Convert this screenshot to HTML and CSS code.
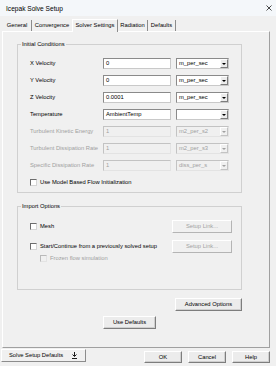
FILE: index.html
```html
<!DOCTYPE html>
<html>
<head lang="en">
    <meta charset="UTF-8">
    <title>Icepak Solve Setup</title>
    <link rel="stylesheet" href="styles.css">
</head>
<body>
<div class="titlebar">
    <span>Icepak Solve Setup</span>
    <svg class="close" width="6" height="6" viewBox="0 0 6 6"><path d="M0.5 0.5L5.5 5.5M5.5 0.5L0.5 5.5"/></svg>
</div>
<ul class="tabs">
    <li class="t1">General</li>
    <li class="t2">Convergence</li>
    <li class="t3 current">Solver Settings</li>
    <li class="t4">Radiation</li>
    <li class="t5">Defaults</li>
</ul>
<div class="panel">
    <fieldset class="group initial">
        <legend>Initial Conditions</legend>
        <div class="field">
            <label>X Velocity</label>
            <span class="edit">0</span>
            <span class="combo">m_per_sec<i class="arrow"></i></span>
        </div>
        <div class="field">
            <label>Y Velocity</label>
            <span class="edit">0</span>
            <span class="combo">m_per_sec<i class="arrow"></i></span>
        </div>
        <div class="field">
            <label>Z Velocity</label>
            <span class="edit">0.0001</span>
            <span class="combo">m_per_sec<i class="arrow"></i></span>
        </div>
        <div class="field">
            <label>Temperature</label>
            <span class="edit">AmbientTemp</span>
            <span class="combo"><i class="arrow"></i></span>
        </div>
        <div class="field disabled">
            <label>Turbulent Kinetic Energy</label>
            <span class="edit">1</span>
            <span class="combo">m2_per_s2<i class="arrow"></i></span>
        </div>
        <div class="field disabled">
            <label>Turbulent Dissipation Rate</label>
            <span class="edit">1</span>
            <span class="combo">m2_per_s3<i class="arrow"></i></span>
        </div>
        <div class="field disabled">
            <label>Specific Dissipation Rate</label>
            <span class="edit">1</span>
            <span class="combo">diss_per_s<i class="arrow"></i></span>
        </div>
        <div class="field">
            <span class="check"><span class="box"></span>Use Model Based Flow Initialization</span>
        </div>
    </fieldset>

    <fieldset class="group imports">
        <legend>Import Options</legend>
        <div class="import-row first">
            <span class="check"><span class="box"></span>Mesh</span>
            <span class="btn link disabled">Setup Link...</span>
        </div>
        <div class="import-row">
            <span class="check"><span class="box"></span>Start/Continue from a previously solved setup</span>
            <span class="btn link disabled">Setup Link...</span>
        </div>
        <div class="import-row sub disabled">
            <span class="check"><span class="box"></span>Frozen flow simulation</span>
        </div>
    </fieldset>

    <div class="actions">
        <span class="btn advanced">Advanced Options</span>
        <span class="btn defaults">Use Defaults</span>
    </div>
</div>
<div class="footer">
    <span class="solve">Solve Setup Defaults
        <svg width="5" height="7" viewBox="0 0 5 7"><path d="M2.5 0V4M0.5 2.5L2.5 4.5L4.5 2.5M0 6.5H5"/></svg>
    </span>
    <div class="dlg">
        <span class="btn">OK</span>
        <span class="btn">Cancel</span>
        <span class="btn">Help</span>
    </div>
</div>
</body>
</html>
```

FILE: styles.css
```css
*{ box-sizing: border-box;}
body,ul,fieldset,legend{ margin: 0; padding: 0;}
body{ width: 276px; height: 366px; overflow: hidden; background: #f0f0f0; color: #000; font: 5.8px/7px "Liberation Sans", Arial, sans-serif; display: flex; flex-direction: column;}

.titlebar{ flex: none; height: 16px; display: flex; align-items: center; justify-content: space-between; padding: 0 4px 0 6px; background: #f4f7fa; font-size: 6.6px;}
.close{ fill: none; stroke: #333; stroke-width: 0.9;}

.tabs{ flex: none; height: 15px; display: flex; align-items: flex-end; padding-left: 3px; list-style: none;}
.tabs li{ height: 11px; line-height: 11px; text-align: center; border-right: 1px solid #8c8c8c;}
.tabs .t1{ width: 29px;}
.tabs .t2{ width: 40px; border-right: none;}
.tabs .t3{ width: 46px;}
.tabs .t4{ width: 30px;}
.tabs .t5{ width: 28px;}
.tabs li.current{ height: 13px; line-height: 11px; margin-bottom: -1px; border: 1px solid; border-color: #fff #8c8c8c transparent #fff; border-bottom: none; background: #f0f0f0; position: relative; z-index: 1;}

.panel{ flex: 1; margin: 0 6px 0 2px; padding: 9px 0 0 14px; border: 1px solid; border-color: #fff #a0a0a0 #a0a0a0 #fff; display: flex; flex-direction: column;}

.group{ width: 225px; min-width: 0; border: 1px solid #d0d0d0; padding: 7px 0 1px;}
.group legend{ padding: 0 1px; margin-left: 3px; line-height: 7px;}

.field{ display: flex; align-items: center; height: 17px; padding-left: 12px;}
.field label{ width: 73px; white-space: nowrap;}
.edit{ width: 68px; height: 11px; margin-right: 5px; padding-left: 2px; line-height: 9px; background: #fff; border: 1px solid; border-color: #8a8a8a #c9c9c9 #c9c9c9 #8a8a8a;}
.combo{ width: 53px; height: 11px; padding: 0 0 0 2px; line-height: 9px; background: #fff; border: 1px solid; border-color: #8a8a8a #c9c9c9 #c9c9c9 #8a8a8a; display: flex; justify-content: space-between;}
.arrow{ width: 8px; height: 9px; margin-left: auto; background: #ececec; border: 1px solid; border-color: #fff #7d7d7d #7d7d7d #fff; display: flex; align-items: center; justify-content: center;}
.arrow:after{ content: ""; border-left: 2px solid transparent; border-right: 2px solid transparent; border-top: 2px solid #000;}

.disabled{ color: #a0a0a0;}
.disabled .edit,.disabled .combo{ background: #f0f0f0; border-color: #c3c3c3 #e3e3e3 #e3e3e3 #c3c3c3;}
.disabled .arrow{ background: #f0f0f0; border-color: #fff #c3c3c3 #c3c3c3 #fff;}
.disabled .arrow:after{ border-top-color: #a0a0a0;}

.check{ display: flex; align-items: center; white-space: nowrap;}
.box{ width: 7px; height: 7px; margin-right: 3px; background: #fff; border: 1px solid; border-color: #6d6d6d #d5d5d5 #d5d5d5 #6d6d6d;}
.disabled .box{ background: #f0f0f0; border-color: #b9b9b9 #e3e3e3 #e3e3e3 #b9b9b9;}

.imports{ margin-top: 10px; padding: 9px 0 26px;}
.import-row{ display: flex; align-items: center; justify-content: space-between; height: 14px; padding: 0 9px 0 12px;}
.import-row.first{ margin-bottom: 6px;}
.import-row.sub{ height: 10px; padding-left: 22px;}

.btn{ display: block; height: 13px; line-height: 11px; text-align: center; background: #ececec; border: 1px solid; border-color: #fff #7d7d7d #7d7d7d #fff; box-shadow: inset -1px -1px 0 #cfcfcf;}
.btn.disabled{ background: #f0f0f0; color: #a3a3a3; border-color: #fff #b4b4b4 #b4b4b4 #fff; box-shadow: none;}
.link{ width: 60px;}

.actions{ width: 225px; display: flex; flex-direction: column;}
.advanced{ width: 67px; align-self: flex-end; margin-top: 8px;}
.defaults{ width: 53px; align-self: center; margin-top: 5px;}

.footer{ flex: none; height: 18px; display: flex; justify-content: space-between; align-items: flex-start;}
.solve{ width: 85px; height: 13px; margin: 1px 0 0 1px; padding: 0 8px 0 7px; display: flex; align-items: center; justify-content: space-between; border: 1px solid; border-color: #fff #8c8c8c #8c8c8c #fff;}
.solve svg{ fill: none; stroke: #000; stroke-width: 0.9;}
.dlg{ display: flex; gap: 6px; margin: 3px 6px 0 0;}
.dlg .btn{ width: 38px; height: 12px; line-height: 10px;}
```
